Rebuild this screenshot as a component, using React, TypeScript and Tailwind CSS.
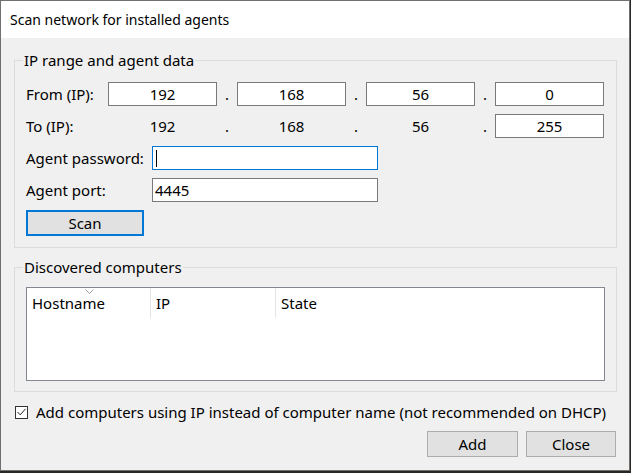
import React from 'react';

const font = { fontFamily: '"Noto Sans", "Open Sans", sans-serif' };

const IpBox = ({ value }: { value: string }) => (
  <div className="w-[109px] h-[24px] bg-white border border-[#7a7a7a] flex items-center justify-center">
    {value}
  </div>
);

const IpText = ({ value }: { value: string }) => (
  <div className="w-[109px] h-[24px] flex items-center justify-center">{value}</div>
);

const Dot = () => <div className="w-[20px] text-center">.</div>;

const WinButton = ({ label, width, primary }: { label: string; width: string; primary?: boolean }) => (
  <button
    className={`${width} h-[26px] bg-[#e1e1e1] flex items-center justify-center border ${
      primary ? 'border-[#0078d7] shadow-[inset_0_0_0_1px_#0078d7]' : 'border-[#adadad]'
    }`}
  >
    {label}
  </button>
);

export default function App() {
  return (
    <div className="w-[631px] h-[473px] bg-[#2a2622] overflow-hidden text-[15px] text-black leading-[20px]" style={font}>
      <div className="w-[630px] h-[471px] border border-[#707070] bg-[#f0f0f0] flex flex-col">
        {/* title bar */}
        <div className="h-[37px] bg-white flex items-center pl-[9px] text-[14px] pt-[1px]">
          Scan network for installed agents
        </div>

        <div className="pl-[13px] flex flex-col">
          {/* IP range group */}
          <fieldset className="mt-[12px] w-[603px] border border-[#dcdcdc]">
            <legend className="ml-[8px] px-[1px] leading-[20px]">IP range and agent data</legend>
            <div className="pl-[11px] pt-[12px] pb-[11px] flex flex-col gap-[8px]">
              <div className="flex items-center h-[24px]">
                <div className="w-[82px]">From (IP):</div>
                <IpBox value="192" />
                <Dot />
                <IpBox value="168" />
                <Dot />
                <IpBox value="56" />
                <Dot />
                <IpBox value="0" />
              </div>
              <div className="flex items-center h-[24px]">
                <div className="w-[82px]">To (IP):</div>
                <IpText value="192" />
                <Dot />
                <IpText value="168" />
                <Dot />
                <IpText value="56" />
                <Dot />
                <IpBox value="255" />
              </div>
              <div className="flex items-center h-[24px]">
                <div className="w-[126px]">Agent password:</div>
                <div className="w-[226px] h-[24px] bg-white border border-[#0078d7] flex items-center pl-[3px]">
                  <span className="w-[1px] h-[17px] bg-black" />
                </div>
              </div>
              <div className="flex items-center h-[24px]">
                <div className="w-[126px]">Agent port:</div>
                <div className="w-[226px] h-[24px] bg-white border border-[#7a7a7a] flex items-center pl-[2px]">
                  4445
                </div>
              </div>
              <div className="flex">
                <WinButton label="Scan" width="w-[118px]" primary />
              </div>
            </div>
          </fieldset>

          {/* discovered computers group */}
          <fieldset className="mt-[9px] w-[603px] border border-[#dcdcdc]">
            <legend className="ml-[8px] px-[1px] leading-[20px]">Discovered computers</legend>
            <div className="pl-[11px] pr-[11px] pt-[10px] pb-[10px]">
              <div className="w-[579px] h-[94px] bg-white border border-[#828790]">
                <div className="flex h-[30px] items-center">
                  <div className="relative w-[124px] h-full flex items-center pl-[5px] border-r border-[#e5e5e5]">
                    <svg className="absolute left-[58px] top-[1px]" width="9" height="6" viewBox="0 0 9 6">
                      <path d="M0.5 0.5 L4.5 4.5 L8.5 0.5" fill="none" stroke="#a0a0a0" strokeWidth="1" />
                    </svg>
                    Hostname
                  </div>
                  <div className="w-[125px] h-full flex items-center pl-[5px] border-r border-[#e5e5e5]">IP</div>
                  <div className="flex-1 h-full flex items-center pl-[5px]">State</div>
                </div>
              </div>
            </div>
          </fieldset>

          {/* checkbox */}
          <div className="mt-[10px] h-[20px] flex items-center">
            <div className="ml-[1px] w-[13px] h-[13px] border border-[#333] bg-white flex items-center justify-center">
              <svg width="9" height="8" viewBox="0 0 9 8">
                <path d="M0.5 4 L3.2 6.8 L8.5 0.8" fill="none" stroke="#222" strokeWidth="1" />
              </svg>
            </div>
            <span className="ml-[8px] whitespace-nowrap">Add computers using IP instead of computer name (not recommended on DHCP)</span>
          </div>

          {/* buttons */}
          <div className="mt-[9px] w-[602px] flex justify-end gap-[8px]">
            <WinButton label="Add" width="w-[91px]" />
            <WinButton label="Close" width="w-[90px]" />
          </div>
        </div>
      </div>
    </div>
  );
}
